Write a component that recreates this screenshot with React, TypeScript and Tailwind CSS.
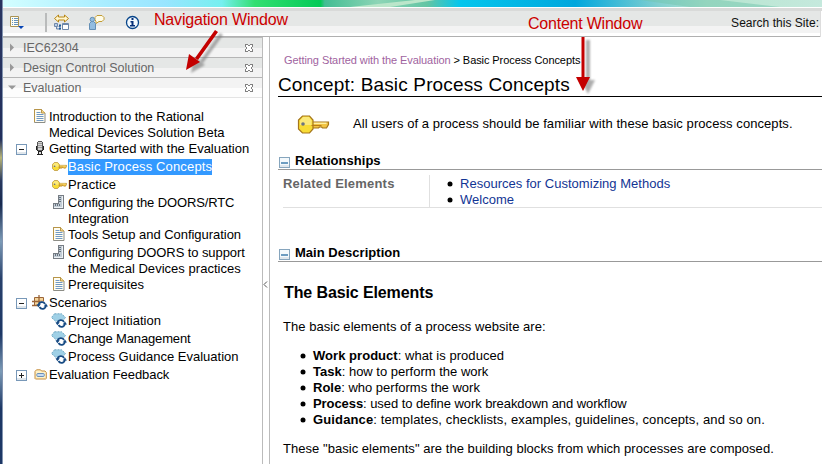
import React from "react";

function Expander({ open, soft }: { open: boolean; soft?: boolean }) {
  return (
    <svg width="11" height="11" viewBox="0 0 11 11" shapeRendering="crispEdges" className="block shrink-0">
      <rect x=".5" y=".5" width="10" height="10" fill={soft ? "#f4f9fc" : "#fff"} stroke={soft ? "#86a5bd" : "#7898b8"} />
      <path d="M1 8h9v2H1z" fill="#dfe6ec" />
      {soft ? <path d="M2 5h7v2H2z" fill="#6d9cc0" /> : <path d="M3 5h5v1H3z" fill="#222" />}
      {!open && <path d="M5 3h1v5H5z" fill="#222" />}
    </svg>
  );
}

function DocIcon() {
  return (
    <svg width="12" height="14" viewBox="0 0 12 14" className="block">
      <path d="M.5.5h7l3.5 3.5v9.500H.5z" fill="#fffdf2" stroke="#8c8d86" />
      <path d="M.5 13V.5h7L11 4" fill="none" stroke="#b89548" />
      <path d="M7.500.5V4H11" fill="#f5d98c" stroke="#b89548" />
      <path d="M2.500 3.500h4M2.500 5.500h7M2.500 7.500h7M2.500 9.500h7M2.500 11.500h7" stroke="#7199c4" />
    </svg>
  );
}

function KeyIcon({ w, h }: { w: number; h: number }) {
  return (
    <svg width={w} height={h} viewBox="0 0 32 19" className="block">
      <path d="M14 7h17v2.500l-2 3.500h-4l-1-1h-2l-1 1h-7z" fill="#f2c443" stroke="#a5761c" strokeWidth="1.200" />
      <path d="M14 8.300h15" stroke="#fff0a0" strokeWidth="1.400" />
      <path d="M5 1h7l3.500 4v9L12 18H5l-4-4V5z" fill="#f8dc35" stroke="#a5761c" strokeWidth="1.200" />
      <path d="M5.500 2h6L14 5.500V10l-11.500 0V5.500z" fill="#fbe97a" />
      <circle cx="5.500" cy="9" r="1.800" fill="#6c7480" />
      <path d="M14 10.500h10" stroke="#b77b1a" strokeWidth="1" />
    </svg>
  );
}

function MicIcon() {
  return (
    <svg width="9" height="15" viewBox="0 0 9 15" shapeRendering="crispEdges" className="block">
      <path d="M2 0h4v1h1v8H6v1H2V9H1V1h1z" fill="#555" />
      <path d="M2 1h4v8H2z" fill="#d4d4d4" />
      <path d="M2 2.500h4M2 4.500h4M2 6.500h4" stroke="#999" />
      <path d="M0 5h1v4H0zM7 5h1v4H7zM1 9h1v1h4V9h1v1H6v1H2v-1H1zM2 11h1v2H2zM5 11h1v2H5zM1 13h6v1H1z" fill="#222" />
      <path d="M3 11h2v2H3z" fill="#ddd" />
    </svg>
  );
}

function StepsIcon() {
  return (
    <svg width="12" height="15" viewBox="0 0 12 15" shapeRendering="crispEdges" className="block">
      <path d="M5.500.5h5v13H.5v-5h5z" fill="#c3cdd6" stroke="#777d84" />
      <path d="M6 2.500h2M6 4.500h2M6 6.500h2M2.500 9v2M4.500 9v2M6.500 9v2" stroke="#66737f" />
      <path d="M9.500 1v11.500H1" fill="none" stroke="#edf2f6" />
    </svg>
  );
}

function Cycle() {
  return (
    <g fill="none" stroke="#164a83" strokeWidth="1.800">
      <path d="M6.500 10.500C7 6.500 11.500 6 13 9M14 10.500C13.500 14.500 9 14.800 7.500 12" />
      <path d="M4.500 9.200h4.300l-2.500 3zM11.700 11.500H16l-2-3z" fill="#164a83" stroke="none" />
    </g>
  );
}

function ProcessIcon() {
  return (
    <svg width="16" height="15" viewBox="0 0 16 15" className="block">
      <path d="M3.500.8h7l4 3.700-3 3.700h-7L.5 4.500z" fill="#9fd0e6" stroke="#73a9c4" strokeDasharray="2 1" />
      <path d="M5.500 9.500l3-3h4l2.500 3.500-3 4h-3z" fill="#fff" />
      <Cycle />
    </svg>
  );
}

function ScenarioIcon() {
  return (
    <svg width="16" height="15" viewBox="0 0 16 15" className="block">
      <path d="M2.500 2.500h9v8h-9z" fill="#f4d49a" stroke="#9b6538" />
      <path d="M7 0v11M0 6.500h12M0 10.500h8" stroke="#9b6538" strokeWidth="1.300" />
      <path d="M5.500 9.500l3-3h4l2.500 3.500-3 4h-3z" fill="#fff" />
      <Cycle />
    </svg>
  );
}

function FolderIcon() {
  return (
    <svg width="13" height="11" viewBox="0 0 13 11" className="block">
      <path d="M1 9.500v-7L2.500.8h4L7.500 2H11l1.300 1.500v6L11.500 10h-10z" fill="#fff2c7" stroke="#c58d3e" />
      <rect x="2.800" y="4.500" width="7.500" height="3" rx="1" fill="#c9dcf0" stroke="#6b8fb9" />
    </svg>
  );
}

const icons: Record<string, React.ReactNode> = {
  doc: <DocIcon />,
  key: <KeyIcon w={15} h={9} />,
  mic: <MicIcon />,
  steps: <StepsIcon />,
  process: <ProcessIcon />,
  scenario: <ScenarioIcon />,
  folder: <FolderIcon />,
};

type Line = [text: string, tracking: string];
type Node = { icon: string; lines: Line[]; child?: boolean; open?: boolean; gap?: boolean; selected?: boolean };

const tree: Node[] = [
  { icon: "doc", lines: [["Introduction to the Rational", "tracking-[-0.02px]"], ["Medical Devices Solution Beta", "tracking-[0px]"]] },
  { icon: "mic", lines: [["Getting Started with the Evaluation", "tracking-[0px]"]], open: true },
  { icon: "key", lines: [["Basic Process Concepts", "tracking-[0.15px]"]], child: true, gap: true, selected: true },
  { icon: "key", lines: [["Practice", "tracking-[0.15px]"]], child: true, gap: true },
  { icon: "steps", lines: [["Configuring the DOORS/RTC", "tracking-[-0.13px]"], ["Integration", "tracking-[-0.07px]"]], child: true, gap: true },
  { icon: "doc", lines: [["Tools Setup and Configuration", "tracking-[-0.04px]"]], child: true },
  { icon: "steps", lines: [["Configuring DOORS to support", "tracking-[-0.09px]"], ["the Medical Devices practices", "tracking-[0.03px]"]], child: true, gap: true },
  { icon: "doc", lines: [["Prerequisites", "tracking-[0.02px]"]], child: true },
  { icon: "scenario", lines: [["Scenarios", "tracking-[0px]"]], open: true, gap: true },
  { icon: "process", lines: [["Project Initiation", "tracking-[0.03px]"]], child: true, gap: true },
  { icon: "process", lines: [["Change Management", "tracking-[-0.15px]"]], child: true, gap: true },
  { icon: "process", lines: [["Process Guidance Evaluation", "tracking-[0px]"]], child: true, gap: true },
  { icon: "folder", lines: [["Evaluation Feedback", "tracking-[-0.06px]"]], open: false, gap: true },
];

function TreeRow({ node }: { node: Node }) {
  return (
    <div className={`flex items-start ${node.gap ? "mt-0.5" : ""}`}>
      <div className={`flex h-4 shrink-0 items-center pt-0.5 ${node.child ? "w-[47px]" : "w-7"}`}>
        {node.open !== undefined && <span className="ml-[13px]"><Expander open={node.open} /></span>}
      </div>
      <div className="flex h-4 w-[18px] shrink-0 items-center justify-center">{icons[node.icon]}</div>
      <div className="-mb-px pt-px leading-4">
        {node.lines.map(([text, tracking]) => (
          <div key={text} className={tracking}><span className={node.selected ? "block h-4 bg-[#3399ff] text-white" : ""}>{text}</span></div>
        ))}
      </div>
    </div>
  );
}

function NavHeader({ title, open }: { title: string; open?: boolean }) {
  return (
    <div className={`flex h-5 items-center border-b pr-2 pl-[5px] text-[12.5px] tracking-[0px] text-[#666] ${open ? "border-[#e4e4e4] bg-[linear-gradient(#f3f3f3_0_10px,#fdfdfd_10px)]" : "border-[#b5b5b5] bg-[linear-gradient(#e5e7e6_0_10px,#f3f3f3_10px)]"}`}>
      <svg width="8" height="9" viewBox="0 0 8 9" className="block"><path d={open ? "M0 2.500h8L4 6.500z" : "M2 0.500v8L6 4.500z"} fill="#999" /></svg>
      <span className="ml-[7px] pt-px">{title}</span>
      <svg width="8" height="8" viewBox="0 0 8 8" className="mt-px mr-px ml-auto block" shapeRendering="crispEdges">
        <path d="M0 0h3v1h2V0h3v3H7v2h1v3H5V7H3v1H0V5h1V3H0z" fill="#fff" />
        <path d="M0 0h3v1H1v2H0zM5 0h3v3H7V1H5zM0 5h1v2h2v1H0zM7 5h1v3H5V7h2zM3 1h2v1H3zM1 3h1v2H1zM6 3h1v2H6zM3 6h2v1H3z" fill="#808080" />
      </svg>
    </div>
  );
}

function Toolbar() {
  return (
    <header className="flex h-[29px] shrink-0 border-b border-[#b0b0b0] bg-[linear-gradient(#d9dad9_0_3px,#e5e7e6_3px_18px,#f3f3f3_18px_25px,#fff_25px)]">
      <svg width="147" height="28" viewBox="3 8 147 28" className="block">
        <path d="M10.500 16.500h8v10h-8z" fill="#fffef4" stroke="#aa9353" />
        <path d="M12 18.500h1M12 20.500h1M12 22.500h1M12 24.500h1M14 18.500h4M14 20.500h4M14 22.500h4M14 24.500h4" stroke="#6593bd" />
        <path d="M18 26h6l-3 3z" fill="#0745b5" />
        <path d="M45 13h2v19h-2z" fill="#b9bbbb" />
        <path d="M54.500 18.500l4-3.500v2h6v-2l4 3.500-4 3.500v-2h-6v2z" fill="#fff6cf" stroke="#b88614" />
        <g fill="none" stroke="#6d87aa"><path d="M54.500 23.500h3v3h-3zM58.500 26.500h2M56.500 27v2h4" fill="#b8cce5" /><path d="M59 25.500h2M59 28.500h2" stroke="#1e5b9b" strokeWidth="2" /><path d="M62.500 23.500h6v6h-6z" fill="#fff" /><path d="M63 24.500h5" /></g>
        <path d="M97 15.500h5l2 2v2l-2 2h-3l-3 2v-2l-1-2v-2z" fill="#fffce8" stroke="#c29c34" />
        <path d="M89.500 29.500v-6l2-2h2l2 2v6z" fill="#92bce0" stroke="#648fb5" />
        <circle cx="92.300" cy="19.500" r="2.200" fill="#92bce0" stroke="#648fb5" />
        <circle cx="132.500" cy="22.500" r="6" fill="#f3faff" stroke="#07458a" strokeWidth="1.300" />
        <path d="M131.500 18h2v2h-2zM130.500 21h3v4h1.500v1.500h-5V25h1.500v-2.500h-1z" fill="#062f78" />
      </svg>
      <div className="ml-auto flex pt-[7px] text-[12px] tracking-[0.03px] leading-4 text-[#111]">
        <span className="mr-px">Search this Site:</span>
        <span className="-mt-1 h-[26px] w-0.5 border-l border-[#ddd] bg-white" />
      </div>
    </header>
  );
}

function SectionTitle({ children }: { children: string }) {
  return (
    <h2 className="flex h-[17px] items-center gap-[5px] border-b border-[#999] pl-px font-bold tracking-[0.03px]">
      <span className="pt-0.5"><Expander open soft /></span>
      <span>{children}</span>
    </h2>
  );
}

const elements = [
  ["Work product", "what is produced", "tracking-[0.04px]"],
  ["Task", "how to perform the work", "tracking-[0px]"],
  ["Role", "who performs the work", "tracking-[0px]"],
  ["Process", "used to define work breakdown and workflow", "tracking-[-0.07px]"],
  ["Guidance", "templates, checklists, examples, guidelines, concepts, and so on.", "tracking-[0.13px]"],
];

const Dot = () => <svg width="6" height="6" viewBox="0 0 6 6" className="block shrink-0"><circle cx="3" cy="3" r="2.500" fill="#000" /></svg>;

function Content() {
  return (
    <main className="min-w-0 flex-1 border-l border-[#bbb] pl-2">
      <p className="mt-[15px] pl-1.5 text-[11px] leading-4 tracking-[-0.08px]"><span className="text-[#a063a0]">Getting Started with the Evaluation</span> &gt; Basic Process Concepts</p>
      <h1 className="mt-1.5 h-[23px] border-b border-black text-[19px] leading-[22px] tracking-[0.15px]"><span>Concept: Basic Process Concepts</span></h1>
      <div className="mt-[15px] flex h-6 items-center pl-[19px]">
        <KeyIcon w={33} h={19} />
        <span className="ml-[23px] tracking-[0.07px]">All users of a process should be familiar with these basic process concepts.</span>
      </div>
      <div className="h-[17px]" />
      <SectionTitle>Relationships</SectionTitle>
      <div className="ml-[5px] flex h-[38px] border-b border-[#e0e0e0] pt-1.5 leading-4">
        <b className="-mt-px w-[147px] border-r border-[#e0e0e0] pt-px text-[#666]"><span>Related Elements</span></b>
        <ul className="ml-[17px] text-[#123594] tracking-[0.02px]">
          {["Resources for Customizing Methods", "Welcome"].map((l) => <li key={l} className="flex items-center gap-[7px]"><Dot /><span>{l}</span></li>)}
        </ul>
      </div>
      <div className="h-[37px]" />
      <SectionTitle>Main Description</SectionTitle>
      <h3 className="mt-[21px] pl-1.5 text-base leading-5 font-bold tracking-[-0.11px]"><span>The Basic Elements</span></h3>
      <p className="mt-4 pl-[5px] leading-4 tracking-[0.04px]">The basic elements of a process website are:</p>
      <ul className="mt-[13px] pl-[22px] leading-4">
        {elements.map(([a, b, tracking]) => <li key={a} className={`flex items-center gap-[7px] ${tracking}`}><Dot /><span><b>{a}</b>: {b}</span></li>)}
      </ul>
      <p className="mt-[13px] pl-[5px] leading-4 tracking-[0.04px]">These "basic elements" are the building blocks from which processes are composed.</p>
    </main>
  );
}

export default function App() {
  return (
    <div className="relative flex h-[464px] w-[822px] overflow-hidden bg-white font-['Liberation_Sans',Arial,sans-serif] text-[13px] text-black tracking-[0.2px]">
      <div className="w-[3px] shrink-0 border-r border-[#8294b0] bg-[linear-gradient(#28345f_0_12%,#222f5c_30%,#b7b578_34%,#29385e_39%,#17294e_44%,#7c9bb7_52%,#29416b_60%,#1d3765_72%,#7c9bb7_80%,#1d3765_88%)]" />
      <div className="flex min-w-0 flex-1 flex-col">
        <svg width="819" height="8" viewBox="3 0 819 8" preserveAspectRatio="none" className="block shrink-0">
          <defs><linearGradient id="sky"><stop offset="0" stopColor="#d4ffff" /><stop offset=".13" stopColor="#a8edff" /><stop offset=".2" stopColor="#99e5ff" /><stop offset=".27" stopColor="#76efef" /><stop offset=".31" stopColor="#32df71" /><stop offset=".39" stopColor="#03ca57" /><stop offset=".395" stopColor="#42bd93" /><stop offset=".46" stopColor="#8dd5b6" /><stop offset=".52" stopColor="#63c5a4" /><stop offset=".56" stopColor="#04c6ed" /><stop offset=".7" stopColor="#00a7dd" /><stop offset=".8" stopColor="#80cfd0" /><stop offset=".86" stopColor="#b6e5cf" /><stop offset="1" stopColor="#c5e9dd" /></linearGradient></defs>
          <path d="M0 0h822v7H0z" fill="url(#sky)" /><path d="M350 7l65-7h20l-45 7z" fill="#bbe6ca" /><path d="M640 0h80l60 7h-90z" fill="#72c5ae" opacity=".5" />
        </svg>
        <Toolbar />
        <div className="flex min-h-0 flex-1">
          <nav className="w-[260px] shrink-0 border-t border-r border-[#bbb]">
            <NavHeader title="IEC62304" />
            <NavHeader title="Design Control Solution" />
            <NavHeader title="Evaluation" open />
            <div className="pt-2.5">{tree.map((n) => <TreeRow key={n.lines[0][0]} node={n} />)}</div>
          </nav>
          <div className="flex w-1.5 shrink-0 items-center">
            <svg width="5" height="7" viewBox="0 0 5 7" className="mt-[68px] block"><path d="M4 .5L1 3.500l3 3" fill="none" stroke="#555" /></svg>
          </div>
          <Content />
        </div>
      </div>
      <span className="absolute top-[10px] left-[154px] text-[16px] leading-5 tracking-[-0.18px] text-[#cc0000]">Navigation Window</span>
      <span className="absolute top-[14px] left-[528px] text-[16px] leading-5 tracking-[-0.22px] text-[#cc0000]">Content Window</span>
      <svg className="pointer-events-none absolute inset-0" width="822" height="464" viewBox="0 0 822 464">
        <defs><filter id="shade" x="-50%" y="-50%" width="200%" height="200%"><feGaussianBlur stdDeviation="1.300" /></filter></defs>
        <g fill="#777" opacity=".6" transform="translate(5 3)" filter="url(#shade)"><path d="M215 30l3 2-20 28-3-2zM186 70l3-16 11 8zM581 37h4v40h-4zM576 77h14l-7 14z" /></g>
        <path d="M215 30l3 2-20 28-3-2zM186 70l3-16 11 8zM581.500 37h3v40h-3zM576 77h14l-7 14z" fill="#c40000" />
      </svg>
    </div>
  );
}
